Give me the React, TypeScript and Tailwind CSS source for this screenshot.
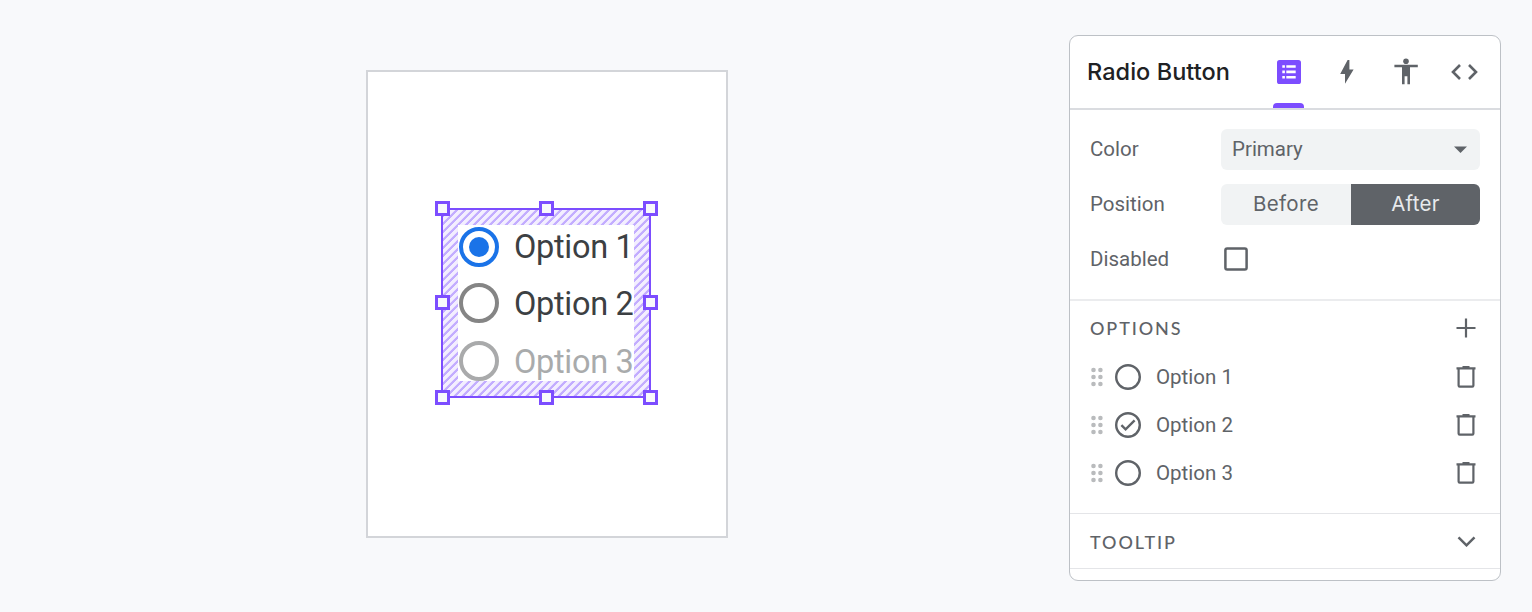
import type { ReactNode } from "react";

function Handle({ className }: { className: string }) {
  return <span className={`absolute size-[15px] border-[3px] border-[#7c4dff] bg-[#f8f9fb] ${className}`} />;
}

type CanvasOptionProps = { label: string; state: "selected" | "idle" | "disabled"; className: string };

function CanvasOption({ label, state, className }: CanvasOptionProps) {
  const ring =
    state === "selected" ? "border-[#1a73e8]" : state === "idle" ? "border-[#858585]" : "border-[#a9aaab]";
  const text = state === "disabled" ? "pt-[2px] text-[#a9abac]" : state === "idle" ? "pt-[2px] text-[#3c4043]" : "pb-px text-[#3c4043]";
  return (
    <div className={`flex items-center ${className}`}>
      <span className={`flex size-10 shrink-0 items-center justify-center rounded-full border-4 ${ring}`}>
        {state === "selected" && <span className="size-5 rounded-full bg-[#1a73e8]" />}
      </span>
      <span className={`ml-[15px] text-[32.5px] leading-10 font-[440] tracking-[-0.3px] whitespace-nowrap ${text}`}>{label}</span>
    </div>
  );
}

function Canvas() {
  return (
    <div className="mt-[70px] ml-[366px] flex h-[468px] w-[362px] shrink-0 items-start border-2 border-[#d3d5d9] bg-white">
      <div className="relative mt-[136px] ml-[73px] h-[190px] w-[210px] border-2 border-[#7c4dff] bg-[#f3eeff] bg-[repeating-linear-gradient(135deg,#f3eeff_0px,#f3eeff_2.7px,#c3adff_3.4px,#c3adff_5px,#f3eeff_5.657px)] pt-[15px] pl-[15px]">
        <div className="h-[156px] w-[176px] bg-white pt-[2px] pl-px">
          <CanvasOption label="Option 1" state="selected" className="h-10" />
          <CanvasOption label="Option 2" state="idle" className="mt-4 h-10" />
          <CanvasOption label="Option 3" state="disabled" className="mt-[18px] h-10" />
        </div>
        <Handle className="-top-[9px] -left-[8px]" />
        <Handle className="-top-[9px] left-[96px]" />
        <Handle className="-top-[9px] left-[200px]" />
        <Handle className="top-[85px] -left-[8px]" />
        <Handle className="top-[85px] left-[200px]" />
        <Handle className="top-[180px] -left-[8px]" />
        <Handle className="top-[180px] left-[96px]" />
        <Handle className="top-[180px] left-[200px]" />
      </div>
    </div>
  );
}

function Header() {
  return (
    <div className="flex h-[74px] items-start border-b-2 border-[#dadce0] pl-[17px]">
      <h1 className="w-[186px] pt-[21px] font-[Inter] text-[23.5px] leading-[30px] font-[450] tracking-[0.05px] text-[#202124]">
        Radio Button
      </h1>
      <div className="flex h-[72px] w-[31px] flex-col items-center justify-between pt-6">
        <svg width="24" height="24" viewBox="0 0 24 24">
          <rect width="24" height="24" rx="2.6" fill="#7c4dff" />
          <path
            d="M5.3 5.2h2.6v2.6H5.3zM9.3 5.2h9.4v2.6H9.3zM5.3 10.6h2.6v2.6H5.3zM9.3 10.6h9.4v2.6H9.3zM5.3 16h2.6v2.6H5.3zM9.3 16h9.4v2.6H9.3z"
            fill="#fff"
          />
        </svg>
        <span className="h-[5px] w-[31px] rounded-t-[4px] bg-[#7c4dff]" />
      </div>
      <svg className="mt-6 ml-[36px]" width="14" height="24" viewBox="0 0 14 24" fill="#5f6368">
        <path d="M9.4 0v9.6h4.2L5 23.8v-9.9H.2L7.6 0z" />
      </svg>
      <svg className="mt-[22px] ml-[40px]" width="24" height="27" viewBox="0 0 24 27" fill="#5f6368">
        <circle cx="12" cy="3.2" r="2.8" />
        <path d="M.4 6.8h23.4v2.5H16v17h-2.6v-8h-2.8v8H8V9.3H.4z" />
      </svg>
      <svg
        className="mt-[28px] ml-[33px]"
        width="27"
        height="16"
        viewBox="0 0 27 16"
        fill="none"
        stroke="#5f6368"
        strokeWidth="2.6"
      >
        <path d="M9 1L2 8l7 7M18 1l7 7-7 7" />
      </svg>
    </div>
  );
}

function Field({ label, children, className }: { label: string; children: ReactNode; className: string }) {
  return (
    <div className={`flex h-[41px] items-center ${className}`}>
      <span className="w-[131px] shrink-0 text-[20.5px] leading-6">{label}</span>
      {children}
    </div>
  );
}

function OptionRow({ label, checked }: { label: string; checked?: boolean }) {
  return (
    <div className="flex h-[48px] items-center">
      <svg width="14" height="20" viewBox="0 0 14 20" fill="#b9bbbd">
        <circle cx="3.5" cy="3" r="2.3" />
        <circle cx="10.4" cy="3" r="2.3" />
        <circle cx="3.5" cy="10" r="2.3" />
        <circle cx="10.4" cy="10" r="2.3" />
        <circle cx="3.5" cy="17" r="2.3" />
        <circle cx="10.4" cy="17" r="2.3" />
      </svg>
      <svg className="ml-[11px]" width="26" height="26" viewBox="0 0 26 26" fill="none" stroke="#5f6368">
        <circle cx="13" cy="13" r="11.8" strokeWidth="2.4" />
        {checked && <path d="M6.4 13.2l4.2 4.2 9-9" strokeWidth="2.4" />}
      </svg>
      <span className="ml-[15px] flex-1 text-[20.5px] leading-6">{label}</span>
      <svg width="20" height="22" viewBox="0 0 20 22" fill="none" stroke="#5f6368">
        <path d="M.5 2.4h19M6.5 1.2h7" strokeWidth="2.2" />
        <path d="M2.6 3v16.6q0 1.1 1.1 1.1h12.6q1.1 0 1.1-1.1V3" strokeWidth="2.2" />
      </svg>
    </div>
  );
}

function Panel() {
  return (
    <aside className="mt-[35px] ml-[341px] h-[546px] w-[432px] shrink-0 overflow-hidden rounded-[9px] border border-[#bdc1c6] bg-white font-[440] text-[#5f6368]">
      <Header />
      <div className="h-[189px] pt-[18.5px] pl-5">
        <Field label="Color" className="">
          <div className="flex h-[41px] w-[259px] items-center justify-between rounded-[6px] bg-[#f1f3f4] pr-[13px] pl-[11px]">
            <span className="text-[20.5px] leading-6">Primary</span>
            <svg width="13" height="7" viewBox="0 0 13 7" fill="#5f6368">
              <path d="M0 .5h13L6.5 7z" />
            </svg>
          </div>
        </Field>
        <Field label="Position" className="mt-[14px]">
          <div className="flex h-[41px] w-[259px] overflow-hidden rounded-[6px] bg-[#f1f3f4] font-[Inter] text-[20.5px] leading-[40px] tracking-[0.3px]">
            <span className="w-[130px] text-center">Before</span>
            <span className="h-[41px] w-[129px] bg-[#5f6368] text-center text-[#e8eaed]">After</span>
          </div>
        </Field>
        <Field label="Disabled" className="mt-[14px]">
          <svg className="ml-[2.5px]" width="24" height="24" viewBox="0 0 24 24" fill="none" stroke="#5f6368" strokeWidth="2.5">
            <rect x="1.4" y="1.4" width="21.2" height="21.2" rx="1.8" />
          </svg>
        </Field>
      </div>
      <section className="h-[214px] border-t-2 border-[#ebecee] pr-6 pl-5">
        <div className="flex h-[52px] items-center justify-between pt-[2px]">
          <h2 className="pt-px font-[Lato] text-[18px] font-medium tracking-[1.9px]">OPTIONS</h2>
          <svg width="20" height="20" viewBox="0 0 20 20" stroke="#5f6368" strokeWidth="2.2">
            <path d="M10 .5v19M.5 10h19" />
          </svg>
        </div>
        <OptionRow label="Option 1" />
        <OptionRow label="Option 2" checked />
        <OptionRow label="Option 3" />
      </section>
      <section className="flex h-[56px] items-center justify-between border-y border-[#e4e5e8] pr-6 pl-5">
        <h2 className="pt-[2px] font-[Lato] text-[18px] font-medium tracking-[1.95px]">TOOLTIP</h2>
        <svg width="19" height="12" viewBox="0 0 19 12" fill="none" stroke="#5f6368" strokeWidth="2.5">
          <path d="M1.5 2.3l8 8 8-8" />
        </svg>
      </section>
    </aside>
  );
}

export default function App() {
  return (
    <main className="flex h-[612px] w-[1532px] items-start overflow-hidden bg-[#f8f9fb] font-[Roboto,sans-serif]">
      <Canvas />
      <Panel />
    </main>
  );
}
